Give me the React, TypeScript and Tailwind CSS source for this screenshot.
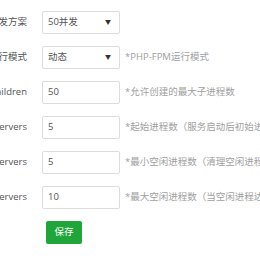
export default function App() {
  const rows: { label: string; value: string; select?: boolean; note?: string }[] = [
    { label: "并发方案", value: "50并发", select: true },
    { label: "运行模式", value: "动态", select: true, note: "*PHP-FPM运行模式" },
    { label: "max_children", value: "50", note: "*允许创建的最大子进程数" },
    { label: "start_servers", value: "5", note: "*起始进程数（服务启动后初始进程数）" },
    { label: "min_spare_servers", value: "5", note: "*最小空闲进程数（清理空闲进程后的保留数量）" },
    { label: "max_spare_servers", value: "10", note: "*最大空闲进程数（当空闲进程达到此值时清理）" },
  ];

  return (
    <div
      className="w-[260px] h-[260px] overflow-hidden bg-white pt-[11px]"
      style={{ fontFamily: '"Open Sans", "Noto Sans CJK SC", sans-serif' }}
    >
      <div className="flex flex-col gap-[12px]">
        {rows.map((r) => (
          <div key={r.label} className="flex items-center h-[23px]">
            <div className="w-[27px] shrink-0 flex justify-end">
              <span className="whitespace-nowrap text-[9.5px] text-[#555]">{r.label}</span>
            </div>
            <div className="ml-[15px] w-[78px] h-[23px] shrink-0 border border-[#dcdcdc] rounded-[2px] flex items-center pl-[5px] pr-[8px] text-[9.5px] text-[#555]">
              <span className="flex-1">{r.value}</span>
              {r.select && <span className="text-[6px] text-[#333]">▼</span>}
            </div>
            {r.note && (
              <span className="ml-[5px] whitespace-nowrap text-[9.5px] text-[#a0a0a0]">{r.note}</span>
            )}
          </div>
        ))}
      </div>
      <div className="mt-[12px] ml-[46px]">
        <button className="w-[36px] h-[23px] rounded-[2px] bg-[#20a53a] text-white text-[9.5px] flex items-center justify-center">
          保存
        </button>
      </div>
    </div>
  );
}
